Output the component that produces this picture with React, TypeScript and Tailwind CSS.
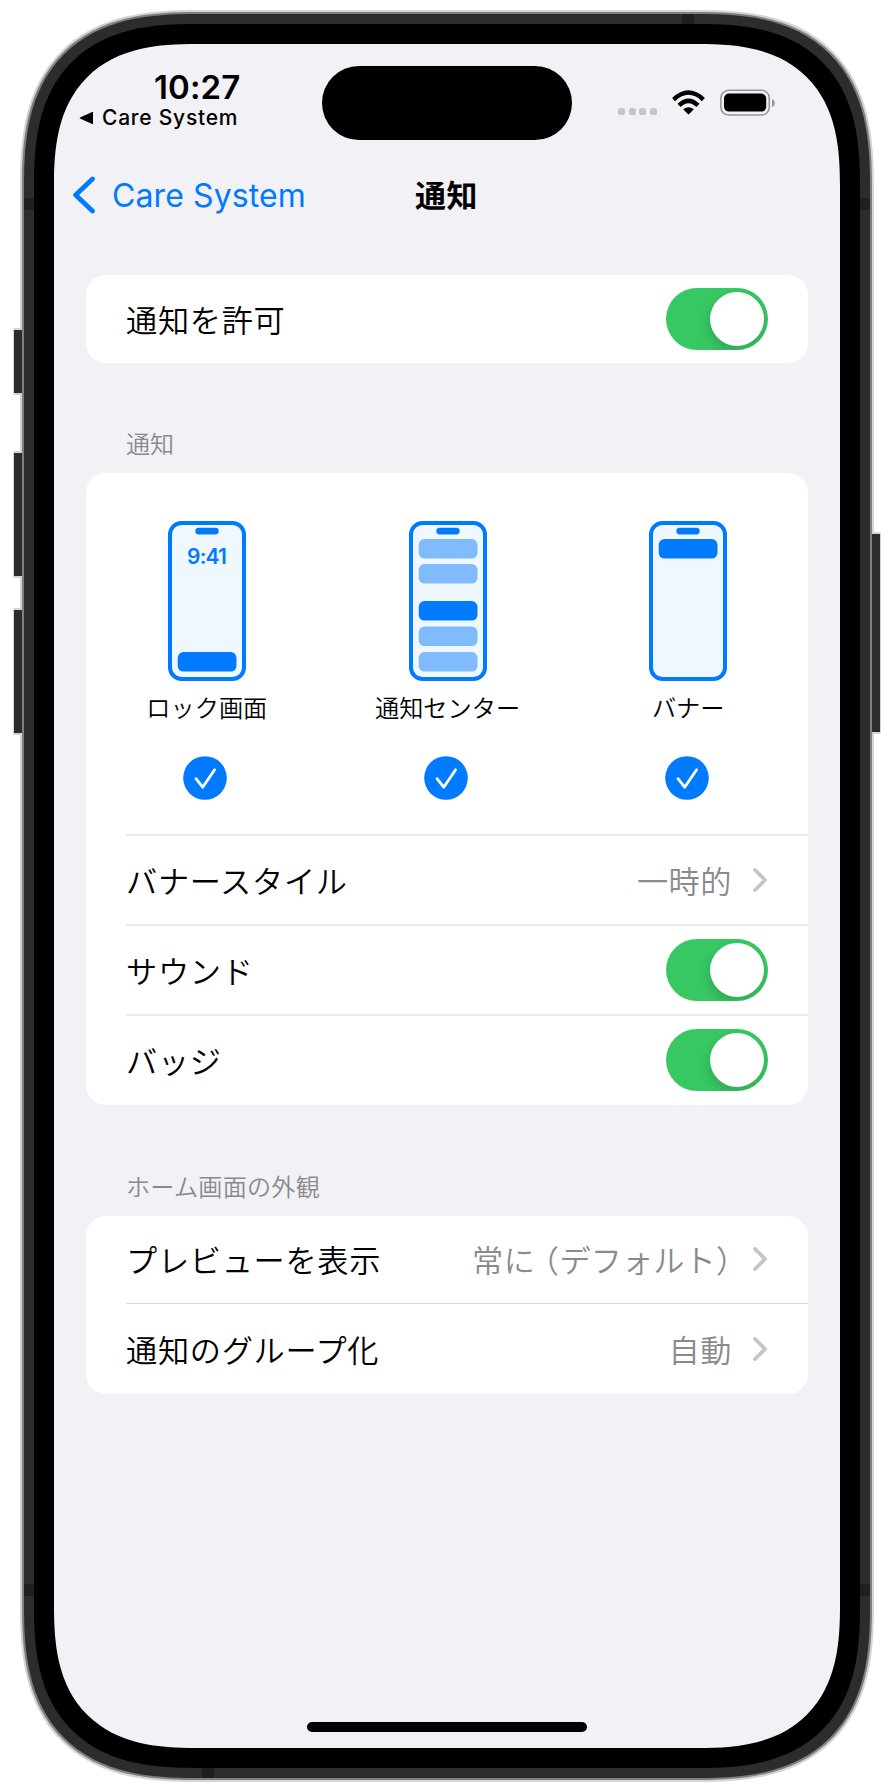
import type { ReactNode } from "react";

const JP = "font-['Inter','Noto_Sans_CJK_JP',sans-serif]";

function Toggle() {
  return (
    <div className="flex h-[62px] w-[102px] shrink-0 items-center justify-end overflow-hidden rounded-full bg-[#37c864] p-1">
      <div className="size-[54px] rounded-full bg-white shadow-[-1px_5px_12px_rgba(0,0,0,0.16)]" />
    </div>
  );
}

function Chevron() {
  return (
    <svg className="mt-[1px] h-[26px] w-[16px]" viewBox="0 0 16 26" fill="none" stroke="#c5c5c7" strokeWidth="3.8" strokeLinecap="round" strokeLinejoin="round">
      <path d="M3 3 L13 13 L3 23" />
    </svg>
  );
}

function Row({ label, className = "", children }: { label: string; className?: string; children: ReactNode }) {
  return (
    <div className={`ml-10 flex items-center justify-between pr-10 ${className}`}>
      <span className="pt-[6px] text-[31.2px] leading-none font-[350] tracking-[0.7px] whitespace-nowrap text-black">{label}</span>
      {children}
    </div>
  );
}

function Value({ children }: { children: ReactNode }) {
  return (
    <div className="flex items-center gap-[20px]">
      <span className="pt-[6px] text-[31.2px] leading-none font-[350] tracking-[0.5px] whitespace-nowrap text-[#8a8a8e]">{children}</span>
      <Chevron />
    </div>
  );
}

function MiniPhone({ kind }: { kind: "lock" | "center" | "banner" }) {
  const strong = "#007aff";
  const soft = "#80bcfd";
  const bars: [number, string][] =
    kind === "lock"
      ? [[131, strong]]
      : kind === "banner"
        ? [[18, strong]]
        : [[18, soft], [43, soft], [80, strong], [105.5, soft], [131, soft]];
  return (
    <svg className="ml-[1px] h-[160px] w-[78px]" viewBox="0 0 78 160">
      <rect x="2" y="2" width="74" height="156" rx="11.5" fill="#f0f8ff" stroke="#007aff" strokeWidth="4" />
      <rect x="27.3" y="6.7" width="23.4" height="6.8" rx="3.4" fill="#007aff" />
      {bars.map(([y, fill]) => (
        <rect key={y} x="9.7" y={y} width="58.8" height="19.6" rx="5.8" fill={fill} />
      ))}
      {kind === "lock" && (
        <text x="38.6" y="42.6" textAnchor="middle" fontFamily="Inter" fontSize="21" fontWeight="600" letterSpacing="-0.8" fill="#007aff">
          9:41
        </text>
      )}
    </svg>
  );
}

function Option({ kind, label }: { kind: "lock" | "center" | "banner"; label: string }) {
  return (
    <div className="flex flex-1 flex-col items-center pt-[47.5px]">
      <MiniPhone kind={kind} />
      <span className="mt-[16.5px] ml-[1px] text-[24.2px] leading-6 font-[350] text-black">{label}</span>
      <svg className="mt-[34.5px] mr-[2px] size-[44px]" viewBox="0 0 44 44" fill="none">
        <circle cx="22" cy="22" r="21.8" fill="#007aff" />
        <path d="M13 22.7 L19.7 31.2 L31.6 13.8" stroke="#fff" strokeWidth="2.8" strokeLinecap="round" strokeLinejoin="round" />
      </svg>
    </div>
  );
}

function SideButton({ className }: { className: string }) {
  return <div className={`absolute border-[#d4d4d4] bg-[#2c2c2c] ${className}`} />;
}

function Screen() {
  return (
    <div className={`flex h-[1704px] w-[786px] flex-col overflow-hidden rounded-[112px] bg-[#f2f1f6] supports-[corner-shape:squircle]:rounded-[142px] supports-[corner-shape:squircle]:[corner-shape:superellipse(1.38)] ${JP}`}>
      <header className="flex h-[96px] items-start">
        <div className="w-[268px] pt-[27px] pl-[25px]">
          <div className="pl-[75px] text-[33px] leading-[33px] font-semibold tracking-[0.1px] text-black">10:27</div>
          <div className="mt-[3px] flex items-center gap-[8px] text-[21px] leading-[22px] font-medium tracking-[0.75px] whitespace-nowrap text-black">
            <svg className="h-[14px] w-[15px]" viewBox="0 0 15 14">
              <path d="M14 1.4 V12.6 Q14 13.4 13.2 13 L1 7.6 Q.2 7 1 6.4 L13.2 1 Q14 .6 14 1.4Z" />
            </svg>
            Care System
          </div>
        </div>
        <div className="mt-[22.3px] h-[74px] w-[250px] rounded-full bg-black" />
        <div className="flex pt-[45px] pl-[46px]">
          <div className="mt-[19px] flex gap-[3.7px]">
            {[0, 1, 2, 3].map((i) => (
              <span key={i} className="size-[7px] rounded-[2.6px] bg-[#c5c4c9]" />
            ))}
          </div>
          <svg className="mt-[1px] ml-[14px] h-[26px] w-[35px]" viewBox="0 0 35 26" fill="none" stroke="#000">
            <path d="M2.6 9.6 Q17.5 -4.5 32.4 9.6" strokeWidth="4.4" />
            <path d="M8 15.4 Q17.5 6.4 27 15.4" strokeWidth="4.4" />
            <path d="M12.2 19.3 Q17.5 15 22.8 19.3 L17.9 24.3 Q17.5 24.7 17.1 24.3Z" fill="#000" stroke="none" />
          </svg>
          <svg className="ml-[14px] h-[27px] w-[56px]" viewBox="0 0 56 27">
            <rect x="0.9" y="1.2" width="48.4" height="24.8" rx="7.8" fill="none" stroke="#97979a" strokeWidth="1.6" />
            <rect x="4" y="4.6" width="42.2" height="18" rx="5" />
            <path d="M52 10 Q54.8 11 54.8 14 Q54.8 17 52 18Z" fill="#97979a" />
          </svg>
        </div>
      </header>
      <nav className="mt-[30px] flex h-[50px] items-center pl-[17.5px]">
        <svg className="h-[38px] w-[24px]" viewBox="0 0 24 38" fill="none" stroke="#007aff" strokeWidth="4.8" strokeLinecap="round" strokeLinejoin="round">
          <path d="M20.5 3 L3.6 19 L20.5 35" />
        </svg>
        <span className="w-[300px] pt-[2px] pl-[16.5px] text-[32px] leading-none tracking-[0.1px] text-[#007aff]">Care System</span>
        <h1 className="ml-[19.5px] pt-[1px] text-[31px] leading-none font-semibold tracking-[0.6px] text-black">通知</h1>
      </nav>
      <main className="flex flex-col px-8 pt-[54.5px]">
        <section className="rounded-[20px] bg-white">
          <Row label="通知を許可" className="h-[88px]">
            <Toggle />
          </Row>
        </section>
        <h2 className="mt-[70px] ml-10 text-[24.1px] leading-6 font-[350] text-[#8a8a8e]">通知</h2>
        <section className="mt-[16.5px] rounded-[20px] bg-white">
          <div className="flex h-[360.5px]">
            <Option kind="lock" label="ロック画面" />
            <Option kind="center" label="通知センター" />
            <Option kind="banner" label="バナー" />
          </div>
          <Row label="バナースタイル" className="h-[90px] border-t-2 border-[#ebebeb]">
            <Value>一時的</Value>
          </Row>
          <Row label="サウンド" className="h-[90px] border-t-2 border-[#ebebeb]">
            <Toggle />
          </Row>
          <Row label="バッジ" className="h-[91px] border-t-2 border-[#ebebeb]">
            <Toggle />
          </Row>
        </section>
        <h2 className="mt-[71px] ml-10 text-[24.1px] leading-6 font-[350] tracking-[0.25px] text-[#8a8a8e]">ホーム画面の外観</h2>
        <section className="mt-[16px] rounded-[20px] bg-white">
          <Row label="プレビューを表示" className="h-[87px]">
            <Value>
              常に
              <span className="ml-[8px] [font-feature-settings:'halt'] [text-spacing-trim:space-all]">（</span>
              <span className="tracking-[0.1px]">デフォルト</span>
              <span className="[font-feature-settings:'halt'] [text-spacing-trim:space-all]">）</span>
            </Value>
          </Row>
          <Row label="通知のグループ化" className="h-[91px] border-t border-[#d8d8da]">
            <Value>自動</Value>
          </Row>
        </section>
      </main>
      <div className="mt-auto mb-[16px] ml-[253px] h-[10px] w-[280px] rounded-full bg-black" />
    </div>
  );
}

export default function App() {
  return (
    <div className="relative h-[1784px] w-[894px] overflow-hidden bg-white">
      <div className="relative mt-[10px] ml-[20px] w-[854px] rounded-[146px] bg-[#d4d4d4] p-[2px] supports-[corner-shape:squircle]:rounded-[176px] supports-[corner-shape:squircle]:[corner-shape:superellipse(1.38)]">
        <div className="rounded-[144px] bg-[#7e7e7e] p-[2px] supports-[corner-shape:squircle]:rounded-[174px] supports-[corner-shape:squircle]:[corner-shape:superellipse(1.38)]">
          <div className="relative rounded-[142px] bg-[#2c2c2c] p-[10px] supports-[corner-shape:squircle]:rounded-[172px] supports-[corner-shape:squircle]:[corner-shape:superellipse(1.38)]">
            <div className="absolute top-[184px] left-0 h-[12px] w-full bg-[#1f1f1f]" />
            <div className="absolute top-[1570px] left-0 h-[12px] w-full bg-[#1f1f1f]" />
            <div className="absolute top-0 left-[658px] h-[10px] w-[12px] bg-[#1f1f1f]" />
            <div className="absolute bottom-0 left-[178px] h-[10px] w-[12px] bg-[#1f1f1f]" />
            <div className="relative rounded-[132px] bg-black p-[20px] supports-[corner-shape:squircle]:rounded-[162px] supports-[corner-shape:squircle]:[corner-shape:superellipse(1.38)]">
              <Screen />
            </div>
          </div>
        </div>
      </div>
      <SideButton className="top-[328px] left-[13px] h-[67px] w-[9px] rounded-l-[2px] border-y-2 border-l" />
      <SideButton className="top-[451px] left-[13px] h-[127px] w-[9px] rounded-l-[2px] border-y-2 border-l" />
      <SideButton className="top-[608px] left-[13px] h-[127px] w-[9px] rounded-l-[2px] border-y-2 border-l" />
      <SideButton className="top-[532px] left-[872px] h-[202px] w-[9px] rounded-r-[2px] border-y-2 border-r" />
    </div>
  );
}
